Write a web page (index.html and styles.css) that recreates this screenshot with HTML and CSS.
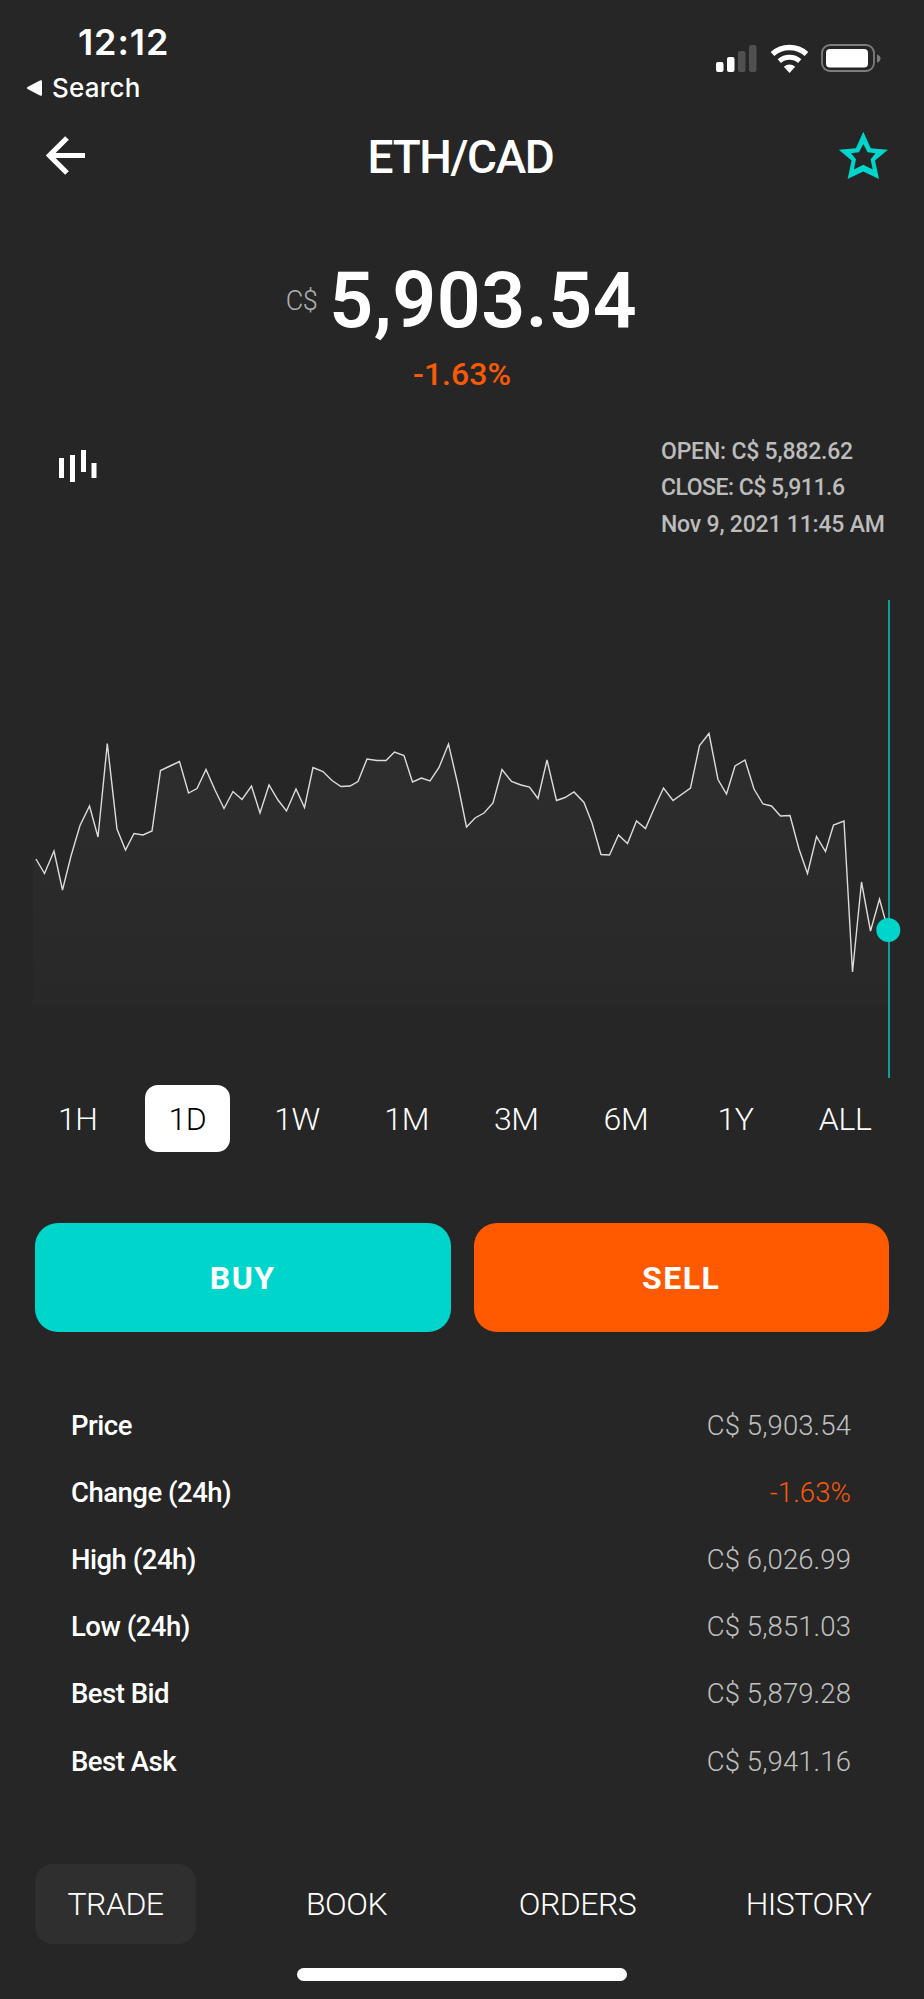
FILE: index.html
```html
<!DOCTYPE html>
<html lang="en">
<head>
  <meta charset="UTF-8">
  <meta name="viewport" content="width=device-width, initial-scale=1.0">
  <title>ETH/CAD</title>
  <link rel="stylesheet" href="styles.css">
</head>
<body>
  <div class="screen">
    <div class="status-bar">
      <div class="status-left">
        <div class="time">12:12</div>
        <div class="back-app">
          <svg width="17" height="18" viewBox="0 0 17 18"><path d="M1.5 8 L14.5 1.3 Q16 0.8 16 2.5 V15.5 Q16 17.2 14.5 16.7 L1.5 10 Q0 9 1.5 8Z" fill="#fff"/></svg>
          <span>Search</span>
        </div>
      </div>
      <div class="status-icons">
        <svg class="signal" width="42" height="28" viewBox="0 0 42 28">
          <rect x="0" y="18" width="7.5" height="10" rx="2" fill="#fff"/>
          <rect x="11" y="13" width="7.5" height="15" rx="2" fill="#fff"/>
          <rect x="22" y="7" width="7.5" height="21" rx="2" fill="#505050"/>
          <rect x="33" y="1" width="7.5" height="27" rx="2" fill="#505050"/>
        </svg>
        <svg class="wifi" width="40" height="30" viewBox="0 0 40 30">
          <path d="M2.5 10 A25.5 25.5 0 0 1 36.5 10" fill="none" stroke="#fff" stroke-width="5.4"/>
          <path d="M9.3 17.2 A15.5 15.5 0 0 1 29.700 17.200" fill="none" stroke="#fff" stroke-width="5"/>
          <path d="M13.8 22.700 Q19.500 18.500 25.200 22.700 L19.500 29Z" fill="#fff"/>
        </svg>
        <svg class="battery" width="60" height="28" viewBox="0 0 60 28">
          <rect x="1" y="1" width="52" height="26" rx="8" fill="none" stroke="#7d7d7d" stroke-width="1.800"/>
          <rect x="5" y="5" width="42" height="18.500" rx="4" fill="#fff"/>
          <path d="M56 10.500 Q59.500 11.500 59.500 14.500 Q59.500 17.500 56 18.500Z" fill="#7d7d7d"/>
        </svg>
      </div>
    </div>

    <div class="header">
      <svg width="40" height="40" viewBox="0 0 40 40"><path d="M21 2 L3.500 19.500 L21 37 M3.500 19.500 H39" fill="none" stroke="#fff" stroke-width="5.200"/></svg>
      <h1>ETH/CAD</h1>
      <svg width="50" height="50" viewBox="0 0 50 50"><path fill-rule="evenodd" fill="#00d5cc" d="M24.300 0.700 L31.700 17.300 L49 18.700 L36 29.500 L40 48 L24.300 40.500 L8.600 48 L12.600 29.500 L-0.400 18.700 L16.900 17.300Z M24.300 13 L20 21.300 L12 22.300 L17 28.300 L14.900 38.500 L24.300 33.700 L33.700 38.500 L31.600 28.300 L36.600 22.300 L28.600 21.300Z"/></svg>
    </div>

    <div class="price">
      <span class="currency">C$</span>
      <span class="amount">5,903.54</span>
    </div>
    <div class="change">-1.63%</div>

    <div class="chart-info">
      <svg width="40" height="34" viewBox="0 0 40 34" fill="#fff">
        <rect x="0" y="8" width="5" height="20"/>
        <rect x="11" y="5" width="5" height="27"/>
        <rect x="22" y="0" width="5" height="22"/>
        <rect x="32.500" y="13" width="5" height="15"/>
      </svg>
      <div class="candle">
        <div class="open">OPEN: C$ 5,882.62</div>
        <div class="close">CLOSE: C$ 5,911.6</div>
        <div class="date">Nov 9, 2021 11:45 AM</div>
      </div>
    </div>

    <svg class="chart" width="924" height="480" viewBox="0 600 924 480">
      <defs>
        <linearGradient id="area" x1="0" y1="734" x2="0" y2="1007" gradientUnits="userSpaceOnUse">
          <stop offset="0" stop-color="#2e2e2e"/>
          <stop offset="1" stop-color="#282828"/>
        </linearGradient>
      </defs>
      <path id="fill" fill="url(#area)"/>
      <path id="line" fill="none" stroke="#dcdcdc" stroke-width="1.400"/>
      <path d="M889 600 V1078" stroke="#119e98" stroke-width="2"/>
      <circle cx="888.300" cy="930" r="12" fill="#00d5cc"/>
    </svg>

    <div class="periods">
      <button>1H</button>
      <button class="active">1D</button>
      <button>1W</button>
      <button>1M</button>
      <button>3M</button>
      <button>6M</button>
      <button>1Y</button>
      <button>ALL</button>
    </div>

    <div class="actions">
      <button class="buy">BUY</button>
      <button class="sell">SELL</button>
    </div>

    <div class="stats">
      <div class="row"><span class="label">Price</span><span class="value">C$ 5,903.54</span></div>
      <div class="row"><span class="label">Change (24h)</span><span class="value down">-1.63%</span></div>
      <div class="row"><span class="label">High (24h)</span><span class="value">C$ 6,026.99</span></div>
      <div class="row"><span class="label">Low (24h)</span><span class="value">C$ 5,851.03</span></div>
      <div class="row"><span class="label">Best Bid</span><span class="value">C$ 5,879.28</span></div>
      <div class="row"><span class="label">Best Ask</span><span class="value">C$ 5,941.16</span></div>
    </div>

    <div class="tabs">
      <button class="active">TRADE</button>
      <button>BOOK</button>
      <button>ORDERS</button>
      <button>HISTORY</button>
    </div>
    <div class="home-indicator"></div>
  </div>

  <script>
    const points = [
      [36,859],[44.5,873.5],[54,851],[62.5,890],[71,856],[80,825.5],[89.5,806],[98,837],[107.3,743.5],[117,829],
      [125.5,850],[134,833.5],[143,835],[152,831],[160.5,770.5],[170,766],[179.5,761.5],[188.5,793],[197,788.5],[206,769.5],
      [215,790],[224,808.5],[233,791.5],[242,799.5],[251.5,786],[260,813],[269,785],[278,800],[286.5,811],[296,789],
      [304.5,807.5],[313,767.5],[323,771.5],[332,780.5],[341,786.5],[350,786],[358,781.5],[367,759],[377,760.5],[386,760.5],
      [394.5,752],[404,755.5],[412.5,782],[421.5,778],[430,781],[439,767.5],[448.5,744],[458,785],[466.5,827],[475,818],
      [484,813],[493,803],[502,769.5],[511.5,781.5],[521,785],[529.5,787],[538,798.5],[547,760],[556.5,800.5],[565,797.5],
      [574,792],[584,802.5],[592,823],[601,854.5],[609.5,855],[618.5,835],[627.5,843.5],[636.5,821],[645.5,828.5],[655,806.5],
      [663.5,788],[673,800.5],[690.5,788],[699.5,745.5],[709,733.5],[718,779.5],[726.5,794],[735,766],[745,760],[754,789],
      [763,804],[771.5,806],[780.5,816],[790,815.5],[799,849],[807.5,873.5],[816.5,836.5],[825.5,851.5],[833.5,825],[844,821],
      [852.5,972],[861.5,882],[870.5,931],[879.5,899],[888,930]
    ];
    const d = 'M' + points.map(p => p.join(' ')).join(' L');
    document.getElementById('line').setAttribute('d', d);
    document.getElementById('fill').setAttribute('d', d + ' V1007 H33 V859Z');
  </script>
</body>
</html>
```

FILE: styles.css
```css
* {
  box-sizing: border-box;
}
body {
  margin: 0;
  background-color: #262626;
  color: #fff;
  font-family: Roboto, "Open Sans", sans-serif;
}
button {
  font-family: inherit;
  color: #fff;
  background: none;
  border: none;
  padding: 0;
}
svg {
  display: block;
  flex: none;
}
.screen {
  width: 924px;
  height: 1999px;
  overflow: hidden;
}

.status-bar {
  display: flex;
  justify-content: space-between;
  height: 120px;
  padding: 20px 43px 0 26px;
  font-family: Inter, sans-serif;
}
.time {
  padding-left: 52px;
  font-size: 36px;
  font-weight: 600;
  line-height: 44px;
  letter-spacing: 0.9px;
}
.back-app {
  display: flex;
  align-items: center;
  gap: 9px;
  height: 47px;
  font-size: 26px;
  font-weight: 500;
  letter-spacing: 0.2px;
}
.status-icons {
  display: flex;
  gap: 11.5px;
  padding-top: 24px;
}

.header {
  display: flex;
  justify-content: space-between;
  align-items: center;
  height: 72px;
  padding: 0 35px 0 46px;
}
.header h1 {
  margin: 0 4px 0 0;
  padding-top: 2px;
  font-size: 46px;
  font-weight: 500;
  letter-spacing: -1.4px;
}

.price {
  display: flex;
  justify-content: center;
  align-items: center;
  gap: 12px;
  height: 120px;
  margin-top: 49px;
  padding-right: 1px;
}
.currency {
  font-size: 27px;
  font-weight: 300;
  letter-spacing: -0.5px;
  color: #b0b0b0;
}
.amount {
  font-size: 77px;
  font-weight: 600;
  letter-spacing: 0.5px;
}
.change {
  height: 40px;
  margin-top: -7px;
  font-size: 32px;
  line-height: 40px;
  font-weight: 500;
  text-align: center;
  color: #fa5a05;
}

.chart-info {
  display: flex;
  justify-content: space-between;
  height: 206px;
  padding: 0 36px 0 59px;
}
.chart-info > svg {
  margin-top: 56px;
}
.candle {
  width: 227px;
  padding-top: 40px;
  font-size: 23px;
  font-weight: 500;
  line-height: 36.3px;
  letter-spacing: -0.2px;
  color: #bcbcbc;
  white-space: nowrap;
}
.close {
  letter-spacing: -0.5px;
}

.periods {
  display: grid;
  grid-template-columns: repeat(8, 1fr);
  justify-items: center;
  height: 67px;
  margin: 5px 24px 0 23px;
}
.periods button {
  width: 85px;
  height: 67px;
  font-size: 32px;
  font-weight: 300;
  letter-spacing: -0.3px;
  border-radius: 13px;
}
.periods .active {
  background-color: #fff;
  color: #000;
}

.actions {
  display: flex;
  gap: 23px;
  margin: 71px 35px 0;
}
.actions button {
  flex: 1;
  height: 109px;
  border-radius: 23px;
  font-size: 32px;
  font-weight: 700;
  letter-spacing: 1.5px;
}
.buy {
  background-color: #00d5cc;
}
.sell {
  background-color: #ff5a00;
}

.stats {
  margin: 60px 73px 0 71px;
}
.row {
  display: flex;
  justify-content: space-between;
  align-items: center;
  height: 67.1px;
  font-size: 27.5px;
}
.label {
  font-weight: 500;
  letter-spacing: -0.5px;
}
.value {
  font-weight: 300;
  letter-spacing: 0.1px;
  color: #c0c0c0;
}
.down {
  color: #fa5a05;
}

.tabs {
  display: grid;
  grid-template-columns: repeat(4, 1fr);
  justify-items: center;
  height: 80px;
  margin-top: 69px;
}
.tabs button {
  width: 161px;
  height: 80px;
  font-size: 32px;
  font-weight: 300;
  letter-spacing: -0.5px;
  border-radius: 18px;
}
.tabs .active {
  background-color: #2f2f2f;
}
.home-indicator {
  width: 330px;
  height: 13px;
  margin: 24px auto 0;
  border-radius: 7px;
  background-color: #fff;
}
```
